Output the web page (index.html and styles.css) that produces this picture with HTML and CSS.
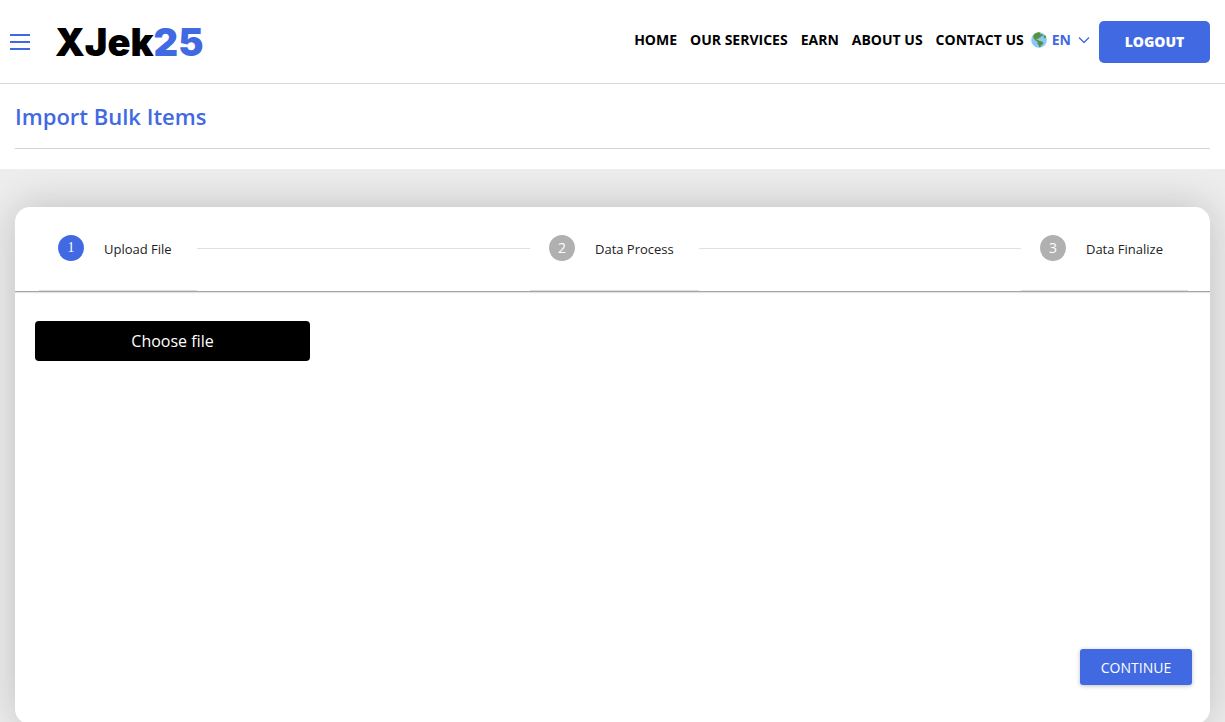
FILE: index.html
```html
<!DOCTYPE html>
<html lang="en">
<head>
<meta charset="utf-8">
<meta name="viewport" content="width=device-width, initial-scale=1">
<title>Import Bulk Items</title>
<link rel="stylesheet" href="styles.css">
</head>
<body>
<header class="topbar">
  <button class="menu-button" type="button" aria-label="Menu"><span></span><span></span><span></span></button>
  <a class="logo" href="#">XJek<span class="logo-accent">25</span></a>
  <nav class="nav">
    <a href="#">HOME</a>
    <a href="#">OUR SERVICES</a>
    <a href="#">EARN</a>
    <a href="#">ABOUT US</a>
    <a href="#">CONTACT US</a>
  </nav>
  <button class="language" type="button">
    <svg width="16" height="16" viewBox="0 0 16 16" aria-hidden="true">
      <circle cx="8" cy="8" r="7.8" fill="#88c9f9"/>
      <path d="M2.5 3.2C4 1.2 6 .3 8.2.3l1.500.6-.8 1 1.500.3 1.600.5-.2 1.300-1.800.2-.6 1.200-1.300.4-.4 1.100-1.400-.5-.9.8 1 .9 1.200.1.9.9 2 .2 1.900 1.300-.5 1.700-1.500.7-.9 1.900-1.300.3-.4-2-1.300-1.500.1-1.900-2.100-1.300L3 6.700 2.300 5z" fill="#5c913b"/>
      <path d="M12.600 3.600l1.500-.4 1.100 1.900-.8 1.500-1.500-.9z" fill="#5c913b"/>
    </svg>
    <span>EN</span>
    <svg class="chevron" width="12" height="8" viewBox="0 0 12 8" aria-hidden="true"><path d="M1 1.500l5 5 5-5" fill="none" stroke="#4169e1" stroke-width="1.300"/></svg>
  </button>
  <button class="logout" type="button">LOGOUT</button>
</header>
<section class="heading">
  <h1>Import Bulk Items</h1>
</section>
<main class="content">
  <form class="card">
    <ol class="steps">
      <li class="step active"><div class="step-body"><span class="step-number">1</span><span class="step-label">Upload File</span></div></li>
      <li class="step"><div class="step-body"><span class="step-number">2</span><span class="step-label">Data Process</span></div></li>
      <li class="step"><div class="step-body"><span class="step-number">3</span><span class="step-label">Data Finalize</span></div></li>
    </ol>
    <div class="upload">
      <input class="file-input" type="file" id="items-file">
      <label class="file-label" for="items-file">Choose file</label>
    </div>
    <div class="actions"><button class="continue" type="submit">CONTINUE</button></div>
  </form>
</main>
</body>
</html>
```
FILE: styles.css
```css
* { box-sizing: border-box; }
body {
  margin: 0;
  min-height: 100vh;
  background: #ededed;
  color: #222;
  font-family: "Open Sans", "Noto Sans", sans-serif;
}
button { border: 0; font-family: inherit; cursor: pointer; }
a { color: inherit; text-decoration: none; }
.topbar {
  display: flex;
  align-items: center;
  height: 84px;
  padding: 0 15px 0 10px;
  background: #fff;
  border-bottom: 1px solid #d9d9d9;
}
.menu-button {
  display: flex;
  flex-direction: column;
  gap: 5px;
  width: 20px;
  padding: 0;
  background: none;
}
.menu-button span { height: 2px; background: #4169e1; }
.logo {
  margin-left: 25px;
  color: #000;
  font: 900 38px/48px Inter, sans-serif;
}
.logo-accent { color: #4169e1; }
.nav {
  display: flex;
  gap: 13px;
  margin-left: auto;
  padding-bottom: 4px;
  color: #000;
  font-size: 14px;
  font-weight: 700;
  line-height: 20px;
}
.language {
  display: flex;
  align-items: center;
  gap: 5px;
  margin: 0 9px 0 7px;
  padding: 0 0 4px;
  background: none;
  color: #4169e1;
  font-size: 14px;
  font-weight: 700;
  line-height: 20px;
}
.chevron { margin-left: 2px; }
.logout {
  width: 111px;
  height: 42px;
  border-radius: 5px;
  background: #4169e1;
  color: #fff;
  font-size: 14px;
  font-weight: 800;
}
.heading { padding: 16px 15px 20px; background: #fff; }
.heading h1 {
  margin: 0;
  padding-bottom: 16px;
  border-bottom: 1px solid #d4d4d4;
  color: #4169e1;
  font-size: 22px;
  font-weight: 600;
  line-height: 32px;
}
.content { padding: 38px 15px 0; overflow: hidden; }
.card {
  display: flex;
  flex-direction: column;
  min-height: calc(100vh - 205px);
  border-radius: 15px;
  background: #fff;
  box-shadow: 0 0 40px rgba(0, 0, 0, 0.2);
}
.steps {
  display: grid;
  grid-template-columns: 1fr 1fr auto;
  margin: 0;
  padding: 0 22px 0 24px;
  border-bottom: 1px solid #a6a6a6;
  box-shadow: 0 1px 1px #e4e4e4;
  list-style: none;
}
.step { display: flex; }
.step:not(:last-child)::after {
  content: "";
  flex: 1;
  height: 1px;
  margin-top: 41px;
  background: #e0e0e0;
}
.step-body {
  display: flex;
  align-items: center;
  gap: 20px;
  height: 84px;
  padding: 0 25px 1px 19px;
  border-bottom: 1px solid #ddd;
  font-size: 13px;
  line-height: 20px;
}
.step-label { padding-top: 2px; }
.step-number {
  display: grid;
  place-items: center;
  width: 26px;
  height: 26px;
  border-radius: 50%;
  background: #b0b0b0;
  color: #fff;
  font-size: 14px;
}
.active .step-number { background: #4169e1; font-family: "Liberation Serif", serif; }
.upload { padding: 29px 20px; }
.file-input { position: absolute; width: 1px; height: 1px; opacity: 0; }
.file-label {
  display: block;
  width: 275px;
  max-width: 100%;
  border-radius: 4px;
  background: #000;
  color: #fff;
  font-size: 16px;
  line-height: 40px;
  text-align: center;
  cursor: pointer;
}
.actions { margin-top: auto; padding: 0 18px 39px; text-align: right; }
.continue {
  width: 112px;
  height: 36px;
  border-radius: 3px;
  background: #4169e1;
  box-shadow: 0 1px 4px rgba(0, 0, 0, 0.25);
  color: #fff;
  font-size: 14px;
}
```
